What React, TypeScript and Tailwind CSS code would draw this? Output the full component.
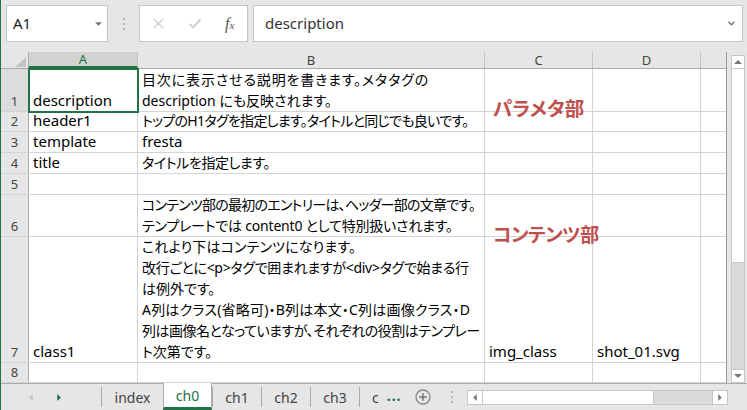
import React from 'react';

const cols = [
  { key: 'A', w: 'w-[109px]' },
  { key: 'B', w: 'w-[347px]' },
  { key: 'C', w: 'w-[108px]' },
  { key: 'D', w: 'w-[108px]' },
  { key: '', w: 'w-[26px]' },
];

// each line: text + tracking class to match the original's glyph widths
type Line = [string, string?];
type Row = { n: string; h: string; a?: Line[]; b?: Line[]; c?: Line[]; d?: Line[] };

const rows: Row[] = [
  {
    n: '1',
    h: 'h-[43px]',
    a: [['description']],
    b: [
      ['目次に表示させる説明を書きます。メタタグの', 'tracking-[0.85px]'],
      ['description にも反映されます。'],
    ],
  },
  {
    n: '2',
    h: 'h-[20px]',
    a: [['header1']],
    b: [['トップのH1タグを指定します。タイトルと同じでも良いです。', 'tracking-[-0.7px]']],
  },
  { n: '3', h: 'h-[21px]', a: [['template']], b: [['fresta', 'text-[15px]']] },
  { n: '4', h: 'h-[21px]', a: [['title']], b: [['タイトルを指定します。', 'tracking-[-0.4px]']] },
  { n: '5', h: 'h-[21px]' },
  {
    n: '6',
    h: 'h-[42px]',
    b: [
      ['コンテンツ部の最初のエントリーは、ヘッダー部の文章です。', 'tracking-[-0.75px]'],
      ['テンプレートでは content0 として特別扱いされます。', 'tracking-[-0.2px]'],
    ],
  },
  {
    n: '7',
    h: 'h-[126px]',
    a: [['class1']],
    b: [
      ['これより下はコンテンツになります。', 'tracking-[0.15px]'],
      ['改行ごとに<p>タグで囲まれますが<div>タグで始まる行', 'tracking-[-0.3px]'],
      ['は例外です。'],
      ['A列はクラス(省略可)・B列は本文・C列は画像クラス・D', 'tracking-[0.2px]'],
      ['列は画像名となっていますが、それぞれの役割はテンプレー', 'tracking-[-0.5px]'],
      ['ト次第です。'],
    ],
    c: [['img_class']],
    d: [['shot_01.svg']],
  },
  { n: '8', h: 'h-[20px]' },
];

function Cell({ lines, w, size }: { lines?: Line[]; w: string; size: string }) {
  return (
    <div className={`${w} ${size} shrink-0 h-full border-r border-[#d4d4d4] flex flex-col justify-end pl-[4px] whitespace-nowrap`}>
      {lines?.map(([t, k], i) => (
        <div key={i} className={`leading-[21px] ${k ?? ''}`}>
          {t}
        </div>
      ))}
    </div>
  );
}

function Triangle({ dir, className }: { dir: 'up' | 'down' | 'left' | 'right'; className: string }) {
  const pts = {
    up: '0,4 4,0 8,4',
    down: '0,0 8,0 4,4',
    left: '4,0 4,8 0,4',
    right: '0,0 0,8 4,4',
  }[dir];
  const vb = dir === 'up' || dir === 'down' ? '0 0 8 4' : '0 0 4 8';
  return (
    <svg viewBox={vb} className={className}>
      <polygon points={pts} fill="currentColor" />
    </svg>
  );
}

function TopBar() {
  return (
    <div className="h-[52px] shrink-0 flex items-start pt-[5px] pl-[5px] pr-[4px]">
      <div className="w-[102px] h-[37px] bg-white border border-[#c6c6c6] flex items-center pl-[6px] pr-[5px]">
        <span className="text-[15px] text-[#222]">A1</span>
        <Triangle dir="down" className="ml-auto w-[7px] h-[4px] text-[#777]" />
      </div>
      <div className="w-[31px] h-[37px] flex flex-col items-center justify-center gap-[3px]">
        <div className="w-[2px] h-[2px] bg-[#b0b0b0]" />
        <div className="w-[2px] h-[2px] bg-[#b0b0b0]" />
        <div className="w-[2px] h-[2px] bg-[#b0b0b0]" />
      </div>
      <div className="w-[109px] h-[37px] bg-white border border-[#c6c6c6] flex items-center">
        <svg viewBox="0 0 12 12" className="ml-[13px] w-[11px] h-[11px]">
          <path d="M1 1L11 11M11 1L1 11" stroke="#c8c8c8" strokeWidth="1.3" fill="none" />
        </svg>
        <svg viewBox="0 0 14 12" className="ml-[24px] w-[14px] h-[11px]">
          <path d="M1 6.5L5 10.5L13 1.5" stroke="#c8c8c8" strokeWidth="1.8" fill="none" />
        </svg>
        <span className="ml-[23px] font-['Liberation_Serif',serif] italic text-[16px] text-[#555] leading-none">
          f<span className="text-[11px]">x</span>
        </span>
      </div>
      <div className="ml-[5px] flex-1 h-[37px] bg-white border border-[#c6c6c6] flex items-center pl-[11px] pr-[7px]">
        <span className="text-[15px] text-[#333]">description</span>
        <svg viewBox="0 0 8 5" className="ml-auto w-[7px] h-[5px]">
          <path d="M0.5 0.5L4 4L7.5 0.5" stroke="#777" strokeWidth="1.6" fill="none" />
        </svg>
      </div>
    </div>
  );
}

function Grid() {
  return (
    <div className="w-[726px] shrink-0 flex flex-col border-r border-[#9a9a9a] bg-white">
      <div className="h-[17px] shrink-0 flex bg-[#e6e6e6] border-b border-[#ababab] text-[13px] text-[#444]">
        <div className="w-[28px] shrink-0 h-full border-r border-[#ababab] relative">
          <svg viewBox="0 0 11 10" className="absolute right-[2px] bottom-[1px] w-[11px] h-[10px]">
            <polygon points="11,0 11,10 0,10" fill="#c4c4c4" />
          </svg>
        </div>
        {cols.map((c, i) => (
          <div
            key={i}
            className={`${c.w} shrink-0 h-full flex items-center justify-center leading-none ${
              i < 4 ? 'border-r border-[#c6c6c6]' : ''
            } ${c.key === 'A' ? 'bg-[#d2d2d2] text-[#217346] border-b-2 border-b-[#217346]' : ''}`}
          >
            {c.key}
          </div>
        ))}
      </div>
      <div className="relative flex-1 flex flex-col">
        {rows.map((r) => (
          <div key={r.n} className={`${r.h} shrink-0 flex border-b border-[#d4d4d4] text-black`}>
            <div
              className={`w-[28px] shrink-0 h-full flex items-end justify-center pb-[1px] text-[13px] text-[#444] leading-[18px] border-r border-[#ababab] ${
                r.n === '1' ? 'bg-[#dcdcdc]' : 'bg-[#e6e6e6]'
              }`}
            >
              {r.n}
            </div>
            <Cell w={cols[0].w} size="text-[15px]" lines={r.a} />
            <Cell w={cols[1].w} size="text-[14px]" lines={r.b} />
            <Cell w={cols[2].w} size="text-[15px]" lines={r.c} />
            <Cell w={cols[3].w} size="text-[15px]" lines={r.d} />
            <div className="w-[26px] shrink-0 h-full" />
          </div>
        ))}
        {/* active cell */}
        <div className="absolute left-[27px] top-[-1px] w-[111px] h-[45px] border-2 border-[#217346]" />
      </div>
    </div>
  );
}

function VScroll() {
  return (
    <div className="ml-[4px] w-[14px] flex flex-col pt-[3px]">
      <div className="h-[14px] bg-white border border-[#c6c6c6] flex items-center justify-center">
        <Triangle dir="up" className="w-[8px] h-[4px] text-[#777]" />
      </div>
      <div className="h-[194px] bg-white border-x border-b border-[#c6c6c6]" />
      <div className="flex-1 bg-[#dadada] border-x border-[#c6c6c6]" />
      <div className="h-[14px] bg-white border border-[#c6c6c6] flex items-center justify-center">
        <Triangle dir="down" className="w-[8px] h-[4px] text-[#777]" />
      </div>
    </div>
  );
}

const tabs = [
  { label: 'index', w: 'w-[62px]' },
  { label: 'ch0', w: 'w-[49px]', active: true },
  { label: 'ch1', w: 'w-[49px]' },
  { label: 'ch2', w: 'w-[49px]' },
  { label: 'ch3', w: 'w-[49px]' },
];

function TabBar() {
  return (
    <div className="h-[27px] shrink-0 flex items-stretch border-t border-[#ababab] bg-[#e6e6e6] text-[14px] text-[#444]">
      <div className="w-[100px] shrink-0 flex items-center">
        <Triangle dir="left" className="ml-[28px] w-[4px] h-[7px] text-[#c6c6c6]" />
        <Triangle dir="right" className="ml-[24px] w-[4px] h-[7px] text-[#1e6b45]" />
      </div>
      {tabs.map((t) => (
        <div
          key={t.label}
          className={`${t.w} shrink-0 flex items-center justify-center ${
            t.active
              ? 'bg-white text-[#217346] border-b-[3px] border-[#217346] border-x border-x-[#ababab] -mt-px'
              : 'border-l border-[#ababab] my-[3px]'
          }`}
        >
          {t.label}
        </div>
      ))}
      <div className="shrink-0 flex items-center border-l border-[#ababab] my-[3px] pl-[12px]">c</div>
      <div className="ml-[8px] flex items-center text-[#217346] font-bold tracking-[1px] pb-[4px]">...</div>
      <div className="ml-[13px] flex items-center">
        <svg viewBox="0 0 16 16" className="w-[16px] h-[16px]">
          <circle cx="8" cy="8" r="7" stroke="#888" strokeWidth="1.3" fill="none" />
          <path d="M8 4.2V11.8M4.2 8H11.8" stroke="#777" strokeWidth="1.5" />
        </svg>
      </div>
      <div className="ml-[20px] flex flex-col justify-center gap-[3px]">
        <div className="w-[2px] h-[2px] bg-[#b8b8b8]" />
        <div className="w-[2px] h-[2px] bg-[#b8b8b8]" />
        <div className="w-[2px] h-[2px] bg-[#b8b8b8]" />
      </div>
      <div className="ml-[14px] my-auto h-[15px] w-[261px] flex border border-[#c6c6c6]">
        <div className="w-[15px] bg-white border-r border-[#c6c6c6] flex items-center justify-center">
          <Triangle dir="left" className="w-[4px] h-[7px] text-[#777]" />
        </div>
        <div className="w-[171px] bg-white border-r border-[#c6c6c6]" />
        <div className="flex-1 bg-[#dadada]" />
        <div className="w-[15px] bg-white border-l border-[#c6c6c6] flex items-center justify-center">
          <Triangle dir="right" className="w-[4px] h-[7px] text-[#777]" />
        </div>
      </div>
    </div>
  );
}

export default function App() {
  return (
    <div className="relative w-[747px] h-[410px] overflow-hidden bg-[#e6e6e6] border-l border-[#217346] flex flex-col font-['Noto_Sans','Noto_Sans_CJK_JP',sans-serif] [font-feature-settings:'palt']">
      <TopBar />
      <div className="h-[331px] shrink-0 flex">
        <Grid />
        <VScroll />
      </div>
      <TabBar />
      <div className="absolute left-[492px] top-[97px] text-[19.5px] leading-[24px] font-bold text-[#c0504d]">
        パラメタ部
      </div>
      <div className="absolute left-[492px] top-[223px] text-[19px] leading-[24px] font-bold text-[#c0504d] tracking-[-0.4px]">
        コンテンツ部
      </div>
    </div>
  );
}
